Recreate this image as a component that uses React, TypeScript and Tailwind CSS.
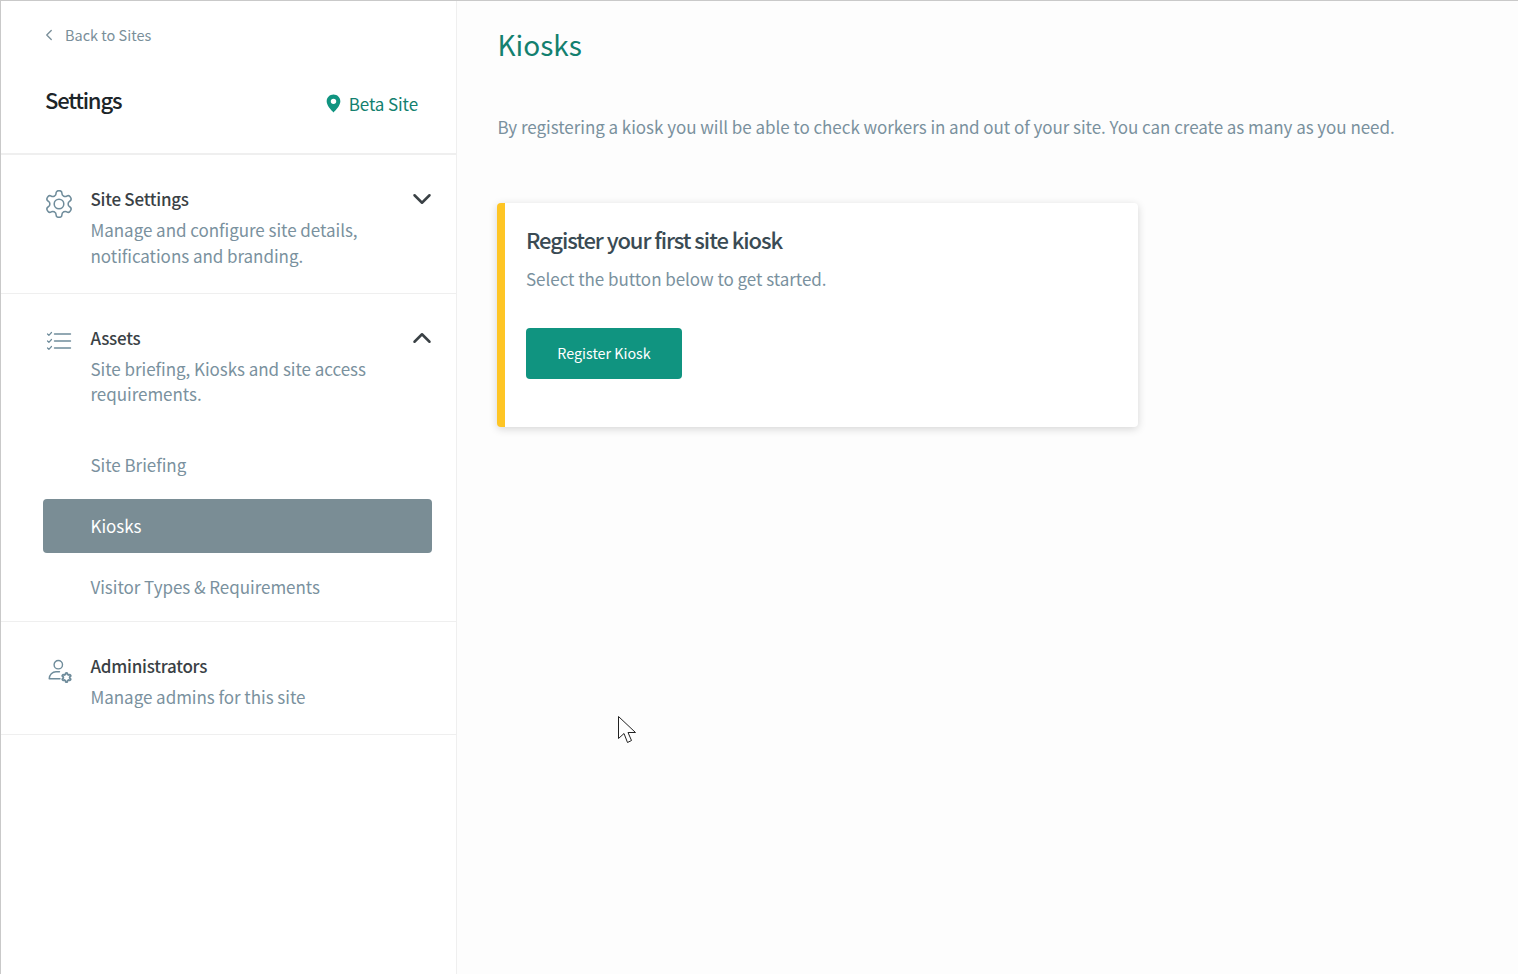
import { ChevronDown, ChevronLeft, ChevronUp } from "lucide-react";

const font = "font-['Noto_Sans_CJK_SC','Source_Sans_Pro',sans-serif]";

const GEAR =
  "M12.22 2h-.44a2 2 0 0 0-2 2v.18a2 2 0 0 1-1 1.73l-.43.25a2 2 0 0 1-2 0l-.15-.08a2 2 0 0 0-2.73.73l-.22.38a2 2 0 0 0 .73 2.73l.15.1a2 2 0 0 1 1 1.72v.51a2 2 0 0 1-1 1.74l-.15.09a2 2 0 0 0-.73 2.73l.22.38a2 2 0 0 0 2.73.73l.15-.08a2 2 0 0 1 2 0l.43.25a2 2 0 0 1 1 1.73V20a2 2 0 0 0 2 2h.44a2 2 0 0 0 2-2v-.18a2 2 0 0 1 1-1.73l.43-.25a2 2 0 0 1 2 0l.15.08a2 2 0 0 0 2.73-.73l.22-.39a2 2 0 0 0-.73-2.73l-.15-.08a2 2 0 0 1-1-1.74v-.5a2 2 0 0 1 1-1.74l.15-.09a2 2 0 0 0 .73-2.73l-.22-.38a2 2 0 0 0-2.73-.73l-.15.08a2 2 0 0 1-2 0l-.43-.25a2 2 0 0 1-1-1.73V4a2 2 0 0 0-2-2z";

function GearIcon() {
  return (
    <svg width="28" height="28" viewBox="1.5 1.5 21 21" fill="none" stroke="#6f8c9b" strokeWidth="1.15" strokeLinecap="round" strokeLinejoin="round">
      <path d={GEAR} />
      <circle cx="12" cy="12" r="3.6" />
    </svg>
  );
}

function ListIcon() {
  return (
    <svg width="26" height="20" viewBox="0 0 26 20" fill="none" stroke="#6f8c9b" strokeLinecap="round" strokeLinejoin="round">
      <path d="M8.500 3h16M8.500 10h16M8.500 17h16" strokeWidth="1.4" />
      <path d="M1.500 3l1.400 1.400L5.500 1.500M1.500 10l1.400 1.400 2.600-2.900M1.500 17l1.400 1.400 2.600-2.900" strokeWidth="1.2" />
    </svg>
  );
}

function AdminIcon() {
  return (
    <svg width="28" height="26" viewBox="0 0 28 26" fill="none" stroke="#6f8c9b" strokeLinecap="round" strokeLinejoin="round">
      <circle cx="12.300" cy="5.700" r="4.200" strokeWidth="1.4" />
      <path d="M13.500 12.700H10C6.500 12.700 3.200 15.500 3.200 19.800H14" strokeWidth="1.4" />
      <svg x="15" y="13" width="11" height="11" viewBox="0 0 24 24">
        <path d={GEAR} strokeWidth="4" />
      </svg>
    </svg>
  );
}

function PinIcon() {
  return (
    <svg width="15" height="19" viewBox="0 0 16 20">
      <path fillRule="evenodd" fill="#109480" d="M8 0.500c4 0 7.300 3.100 7.300 7.100 0 4.400-4.500 9.100-7.300 11.900C5.200 16.700 0.700 12 0.700 7.600 0.700 3.600 4 0.500 8 0.500zM8 4.800a2.900 2.900 0 1 0 0 5.800 2.900 2.900 0 0 0 0-5.800z" />
    </svg>
  );
}

function Cursor() {
  return (
    <svg className="absolute left-[616px] top-[714px]" width="21" height="30" viewBox="0 0 21 30" fill="#fff" stroke="#222" strokeWidth="1" strokeLinejoin="miter">
      <path d="M1.500 1.500V23.500L7 18.500 10.500 27.500 14.500 25.500 11 17.500H18.500Z" />
    </svg>
  );
}

export default function App() {
  return (
    <div className={`${font} relative flex min-h-[974px] border-t border-l border-[#c9c9c9] bg-[#fdfdfd]`}>
      {/* Sidebar */}
      <aside className="w-[456px] shrink-0 border-r border-[#efefef] bg-white">
        <div className="h-[154px] border-b-2 border-[#efefef] pl-[44px] pr-[38px]">
          <div className="flex h-[69px] items-center pb-[1px] text-[#7a8f9a]">
            <ChevronLeft size={18} strokeWidth={1.8} className="-ml-[5px]" />
            <span className="ml-[7px] text-[14.5px] leading-5">Back to Sites</span>
          </div>
          <div className="flex items-center justify-between">
            <h2 className="text-[22px] leading-[58px] font-medium tracking-[-1.2px] text-[#1c2529]">Settings</h2>
            <div className="mt-[9px] flex items-center gap-[8px] text-[17px] tracking-[-0.1px] text-[#13806f]">
              <PinIcon />
              <span>Beta Site</span>
            </div>
          </div>
        </div>

        <section className="h-[139px] border-b border-[#efefef] pt-[30px] pl-[43px] pr-[24px]">
          <div className="flex">
            <div className="w-[46.5px] shrink-0 pt-[5px] pl-[1px]"><GearIcon /></div>
            <div className="grow">
              <div className="flex items-center justify-between">
                <h3 className="text-[17px] leading-7 font-medium tracking-[-0.25px] text-[#3a4145]">Site Settings</h3>
                <ChevronDown size={30} strokeWidth={2} color="#3a4145" className="-my-1 -mr-[5px]" />
              </div>
              <p className="mt-[3.500px] text-[17px] leading-[26px] tracking-[-0.04px] text-[#7a919e]">Manage and configure site details,<br />notifications and branding.</p>
            </div>
          </div>
        </section>

        <section className="h-[328px] border-b border-[#efefef] pt-[30px] pl-[42px] pr-[24px]">
          <div className="flex pl-[1px]">
            <div className="w-[46.5px] shrink-0 pt-[7px] pl-[2px]"><ListIcon /></div>
            <div className="grow">
              <div className="flex items-center justify-between">
                <h3 className="text-[17px] leading-7 font-medium tracking-[-0.25px] text-[#3a4145]">Assets</h3>
                <ChevronUp size={30} strokeWidth={2} color="#3a4145" className="-my-1 -mr-[5px]" />
              </div>
              <p className="mt-[4px] text-[17px] leading-[25px] tracking-[-0.04px] text-[#7a919e]">Site briefing, Kiosks and site access<br />requirements.</p>
            </div>
          </div>
          <ul className="mt-[32px] text-[17px] tracking-[-0.04px] text-[#7a919e]">
            <li className="flex h-[54px] items-center pb-[1px] pl-[47.5px]">Site Briefing</li>
            <li className="mt-[7px] flex h-[54px] items-center rounded-[4px] bg-[#7a8d95] pb-[1px] pl-[47.5px] text-white">Kiosks</li>
            <li className="mt-[7px] flex h-[54px] items-center pb-[1px] pl-[47.5px]">Visitor Types &amp; Requirements</li>
          </ul>
        </section>

        <section className="h-[113px] border-b border-[#efefef] pt-[30px] pl-[43px] pr-[24px]">
          <div className="flex">
            <div className="w-[46.5px] shrink-0 pt-[7px] pl-[2px]"><AdminIcon /></div>
            <div className="grow">
              <h3 className="text-[17px] leading-7 font-medium tracking-[-0.25px] text-[#3a4145]">Administrators</h3>
              <p className="mt-[3.500px] text-[17px] leading-[26px] tracking-[-0.04px] text-[#7a919e]">Manage admins for this site</p>
            </div>
          </div>
        </section>
      </aside>

      {/* Main content */}
      <main className="grow pl-[40.5px]">
        <h1 className="pt-[21px] text-[28px] leading-[44px] text-[#13806f]">Kiosks</h1>
        <p className="mt-[48px] text-[17px] leading-[26px] tracking-[-0.04px] text-[#7a919e]">By registering a kiosk you will be able to check workers in and out of your site. You can create as many as you need.</p>
        <div className="mt-[63px] ml-[-0.5px] h-[224px] w-[641px] rounded-[4px] border-l-8 border-[#fec524] bg-white pt-[19px] pl-[21px] shadow-[0_2px_8px_rgba(0,0,0,0.16)]">
          <h2 className="text-[22px] leading-[34px] font-medium tracking-[-1.07px] text-[#3a4b54]">Register your first site kiosk</h2>
          <p className="mt-[10px] text-[17px] leading-[26px] tracking-[-0.04px] text-[#7a919e]">Select the button below to get started.</p>
          <button className="mt-[36px] h-[51px] w-[156px] rounded-[4px] bg-[#109480] pb-[1px] text-[14.3px] font-normal text-white">Register Kiosk</button>
        </div>
      </main>

      <Cursor />
    </div>
  );
}
